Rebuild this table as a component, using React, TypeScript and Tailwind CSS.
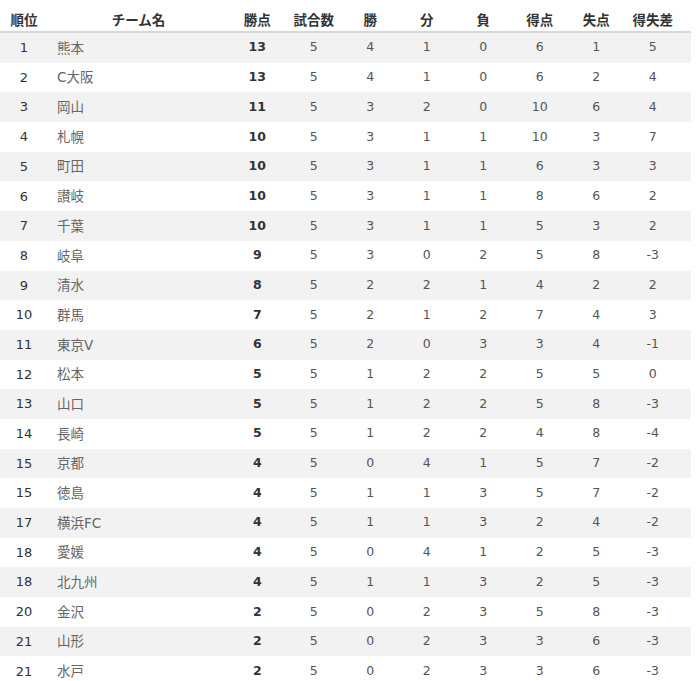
import React from "react";

const rows: [string, string, number, number, number, number, number, number, number, number][] = [
  ["1", "熊本", 13, 5, 4, 1, 0, 6, 1, 5],
  ["2", "C大阪", 13, 5, 4, 1, 0, 6, 2, 4],
  ["3", "岡山", 11, 5, 3, 2, 0, 10, 6, 4],
  ["4", "札幌", 10, 5, 3, 1, 1, 10, 3, 7],
  ["5", "町田", 10, 5, 3, 1, 1, 6, 3, 3],
  ["6", "讃岐", 10, 5, 3, 1, 1, 8, 6, 2],
  ["7", "千葉", 10, 5, 3, 1, 1, 5, 3, 2],
  ["8", "岐阜", 9, 5, 3, 0, 2, 5, 8, -3],
  ["9", "清水", 8, 5, 2, 2, 1, 4, 2, 2],
  ["10", "群馬", 7, 5, 2, 1, 2, 7, 4, 3],
  ["11", "東京V", 6, 5, 2, 0, 3, 3, 4, -1],
  ["12", "松本", 5, 5, 1, 2, 2, 5, 5, 0],
  ["13", "山口", 5, 5, 1, 2, 2, 5, 8, -3],
  ["14", "長崎", 5, 5, 1, 2, 2, 4, 8, -4],
  ["15", "京都", 4, 5, 0, 4, 1, 5, 7, -2],
  ["15", "徳島", 4, 5, 1, 1, 3, 5, 7, -2],
  ["17", "横浜FC", 4, 5, 1, 1, 3, 2, 4, -2],
  ["18", "愛媛", 4, 5, 0, 4, 1, 2, 5, -3],
  ["18", "北九州", 4, 5, 1, 1, 3, 2, 5, -3],
  ["20", "金沢", 2, 5, 0, 2, 3, 5, 8, -3],
  ["21", "山形", 2, 5, 0, 2, 3, 3, 6, -3],
  ["21", "水戸", 2, 5, 0, 2, 3, 3, 6, -3],
];

const headers = ["勝点", "試合数", "勝", "分", "負", "得点", "失点", "得失差"];

const grid = "grid grid-cols-[48px_181px_repeat(8,56.5px)] w-[691px]";

export default function App() {
  return (
    <div
      className="bg-white w-[697px] h-[681px] overflow-hidden"
      style={{ fontFamily: '"DejaVu Sans", "Noto Sans CJK JP", sans-serif' }}
    >
      <div className={`${grid} h-[33px] border-b-2 border-[#d8d8d8] pt-[9px] items-center text-[13.5px] font-bold text-[#333]`}>
        <div className="text-center">順位</div>
        <div className="text-center">チーム名</div>
        {headers.map((h) => (
          <div key={h} className="text-center">
            {h}
          </div>
        ))}
      </div>
      {rows.map((r, i) => (
        <div
          key={i}
          className={`${grid} h-[29.7px] items-center text-[#555] ${i % 2 === 0 ? "bg-[#f2f2f2]" : "bg-white"}`}
        >
          <div className="text-center text-[13px] text-[#333]">{r[0]}</div>
          <div className="pl-[9px] text-[13.5px] text-[#666]">{r[1]}</div>
          <div className="text-center text-[12.5px] font-bold text-[#333]">{r[2]}</div>
          {r.slice(3).map((v, j) => (
            <div key={j} className="text-center text-[12.5px]">
              {v}
            </div>
          ))}
        </div>
      ))}
    </div>
  );
}
